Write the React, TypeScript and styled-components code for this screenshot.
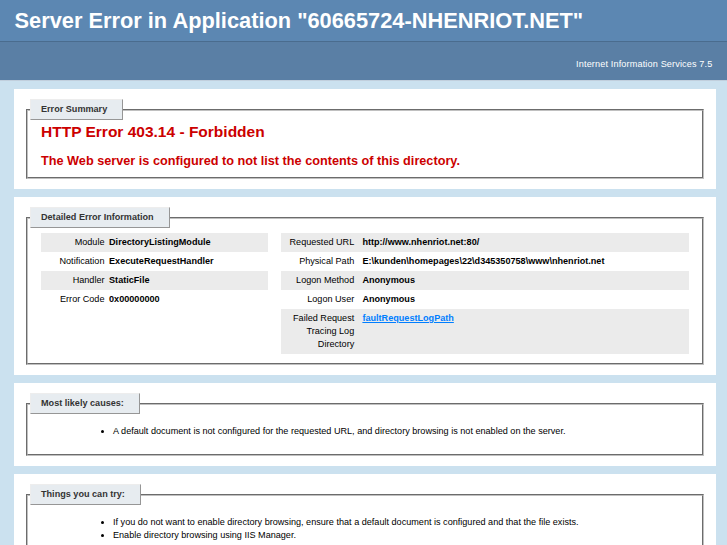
import React from 'react';
import styled, { createGlobalStyle } from 'styled-components';

const GlobalStyle = createGlobalStyle`
  body {
    margin: 0;
    background: #cbe1ef;
    font-family: 'Liberation Sans', Arial, Helvetica, sans-serif;
    font-size: 9.1px;
    color: #000;
  }
`;

const Header = styled.div`
  padding: 6px 2%;
  background-color: #5c87b2;
  color: #fff;
`;

const Title = styled.h1`
  margin: 0;
  font-size: 21.8px;
  line-height: 29px;
  font-weight: bold;
  color: #fff;
`;

const ServerVersion = styled.div`
  padding: 13px 2% 6px;
  background-color: #5a7fa5;
  border-top: 1px solid #4a6c8e;
  border-bottom: 1px solid #c1cfdd;
  color: #fff;
  text-align: right;

  p {
    margin: 5px 0;
    line-height: 9px;
    letter-spacing: 0.15px;
  }
`;

const Content = styled.div`
  margin: 0 11px 0 14px;
  display: flex;
  flex-direction: column;
  gap: 8px;
  padding: 8px 0 20px;
`;

const Panel = styled.div`
  background: #fff;
  padding: 10px;
`;

const Box = styled.fieldset<{ $bottom?: number }>`
  margin: 0 2px;
  padding: 0 13px ${(p) => p.$bottom ?? 10}px 13px;
  border: 2px groove #c0c0c0;
  min-width: 0;
`;

const Legend = styled.legend`
  padding: 4px 15px 4px 10px;
  margin: 0 0 0 -11px;
  background: #e7ecf0;
  border-top: 1px solid #ededed;
  border-left: 1px solid #ededed;
  border-right: 1px solid #969696;
  border-bottom: 1px solid #969696;
  color: #333;
  font-weight: bold;
  font-size: 9.1px;
  line-height: 11px;
`;

const ErrorTitle = styled.h2`
  font-size: 15.5px;
  margin: 3px 0 0;
  color: #cc0000;
`;

const ErrorText = styled.h3`
  font-size: 12.7px;
  margin: 13px 0 0;
  color: #cc0000;
`;

const Details = styled.div`
  display: flex;
  gap: 2%;
`;

const Column = styled.div<{ $width: string }>`
  width: ${(p) => p.$width};
`;

const InfoTable = styled.table`
  margin: 5px 0 0;
  width: 100%;
  border: none;
  border-collapse: collapse;
`;

const Row = styled.tr<{ $alt?: boolean }>`
  background-color: ${(p) => (p.$alt ? '#ebebeb' : 'transparent')};
`;

const Label = styled.th<{ $width: string }>`
  box-sizing: border-box;
  width: ${(p) => p.$width};
  vertical-align: top;
  padding: 3px 2% 3px 0;
  text-align: right;
  font-weight: normal;
  line-height: 13px;
`;

const Value = styled.td`
  vertical-align: top;
  padding: 3px 0;
  text-align: left;
  font-weight: bold;
  line-height: 13px;
`;

const Link = styled.a`
  color: #007eff;
  font-weight: bold;
`;

const List = styled.ul`
  margin: 11px 0 6px 32px;
  line-height: 13px;
`;

const left: [string, string][] = [
  ['Module', 'DirectoryListingModule'],
  ['Notification', 'ExecuteRequestHandler'],
  ['Handler', 'StaticFile'],
  ['Error Code', '0x00000000'],
];

const right: [string, React.ReactNode][] = [
  ['Requested URL', 'http://www.nhenriot.net:80/'],
  ['Physical Path', 'E:\\kunden\\homepages\\22\\d345350758\\www\\nhenriot.net'],
  ['Logon Method', 'Anonymous'],
  ['Logon User', 'Anonymous'],
  ['Failed Request Tracing Log Directory', <Link href="#">faultRequestLogPath</Link>],
];

export default function App() {
  return (
    <>
      <GlobalStyle />
      <Header>
        <Title>Server Error in Application "60665724-NHENRIOT.NET"</Title>
      </Header>
      <ServerVersion>
        <p>Internet Information Services 7.5</p>
      </ServerVersion>
      <Content>
        <Panel>
          <Box $bottom={9}>
            <Legend>Error Summary</Legend>
            <ErrorTitle>HTTP Error 403.14 - Forbidden</ErrorTitle>
            <ErrorText>The Web server is configured to not list the contents of this directory.</ErrorText>
          </Box>
        </Panel>
        <Panel>
          <Box $bottom={9}>
            <Legend>Detailed Error Information</Legend>
            <Details>
              <Column $width="35%">
                <InfoTable>
                  <tbody>
                    {left.map(([k, v], i) => (
                      <Row key={k} $alt={i % 2 === 0}>
                        <Label $width="30%">{k}</Label>
                        <Value>{v}</Value>
                      </Row>
                    ))}
                  </tbody>
                </InfoTable>
              </Column>
              <Column $width="63%">
                <InfoTable>
                  <tbody>
                    {right.map(([k, v], i) => (
                      <Row key={k} $alt={i % 2 === 0}>
                        <Label $width="20%">{k}</Label>
                        <Value>{v}</Value>
                      </Row>
                    ))}
                  </tbody>
                </InfoTable>
              </Column>
            </Details>
          </Box>
        </Panel>
        <Panel>
          <Box>
            <Legend>Most likely causes:</Legend>
            <List>
              <li>A default document is not configured for the requested URL, and directory browsing is not enabled on the server.</li>
            </List>
          </Box>
        </Panel>
        <Panel>
          <Box $bottom={20}>
            <Legend>Things you can try:</Legend>
            <List>
              <li>If you do not want to enable directory browsing, ensure that a default document is configured and that the file exists.</li>
              <li>Enable directory browsing using IIS Manager.</li>
            </List>
          </Box>
        </Panel>
      </Content>
    </>
  );
}
